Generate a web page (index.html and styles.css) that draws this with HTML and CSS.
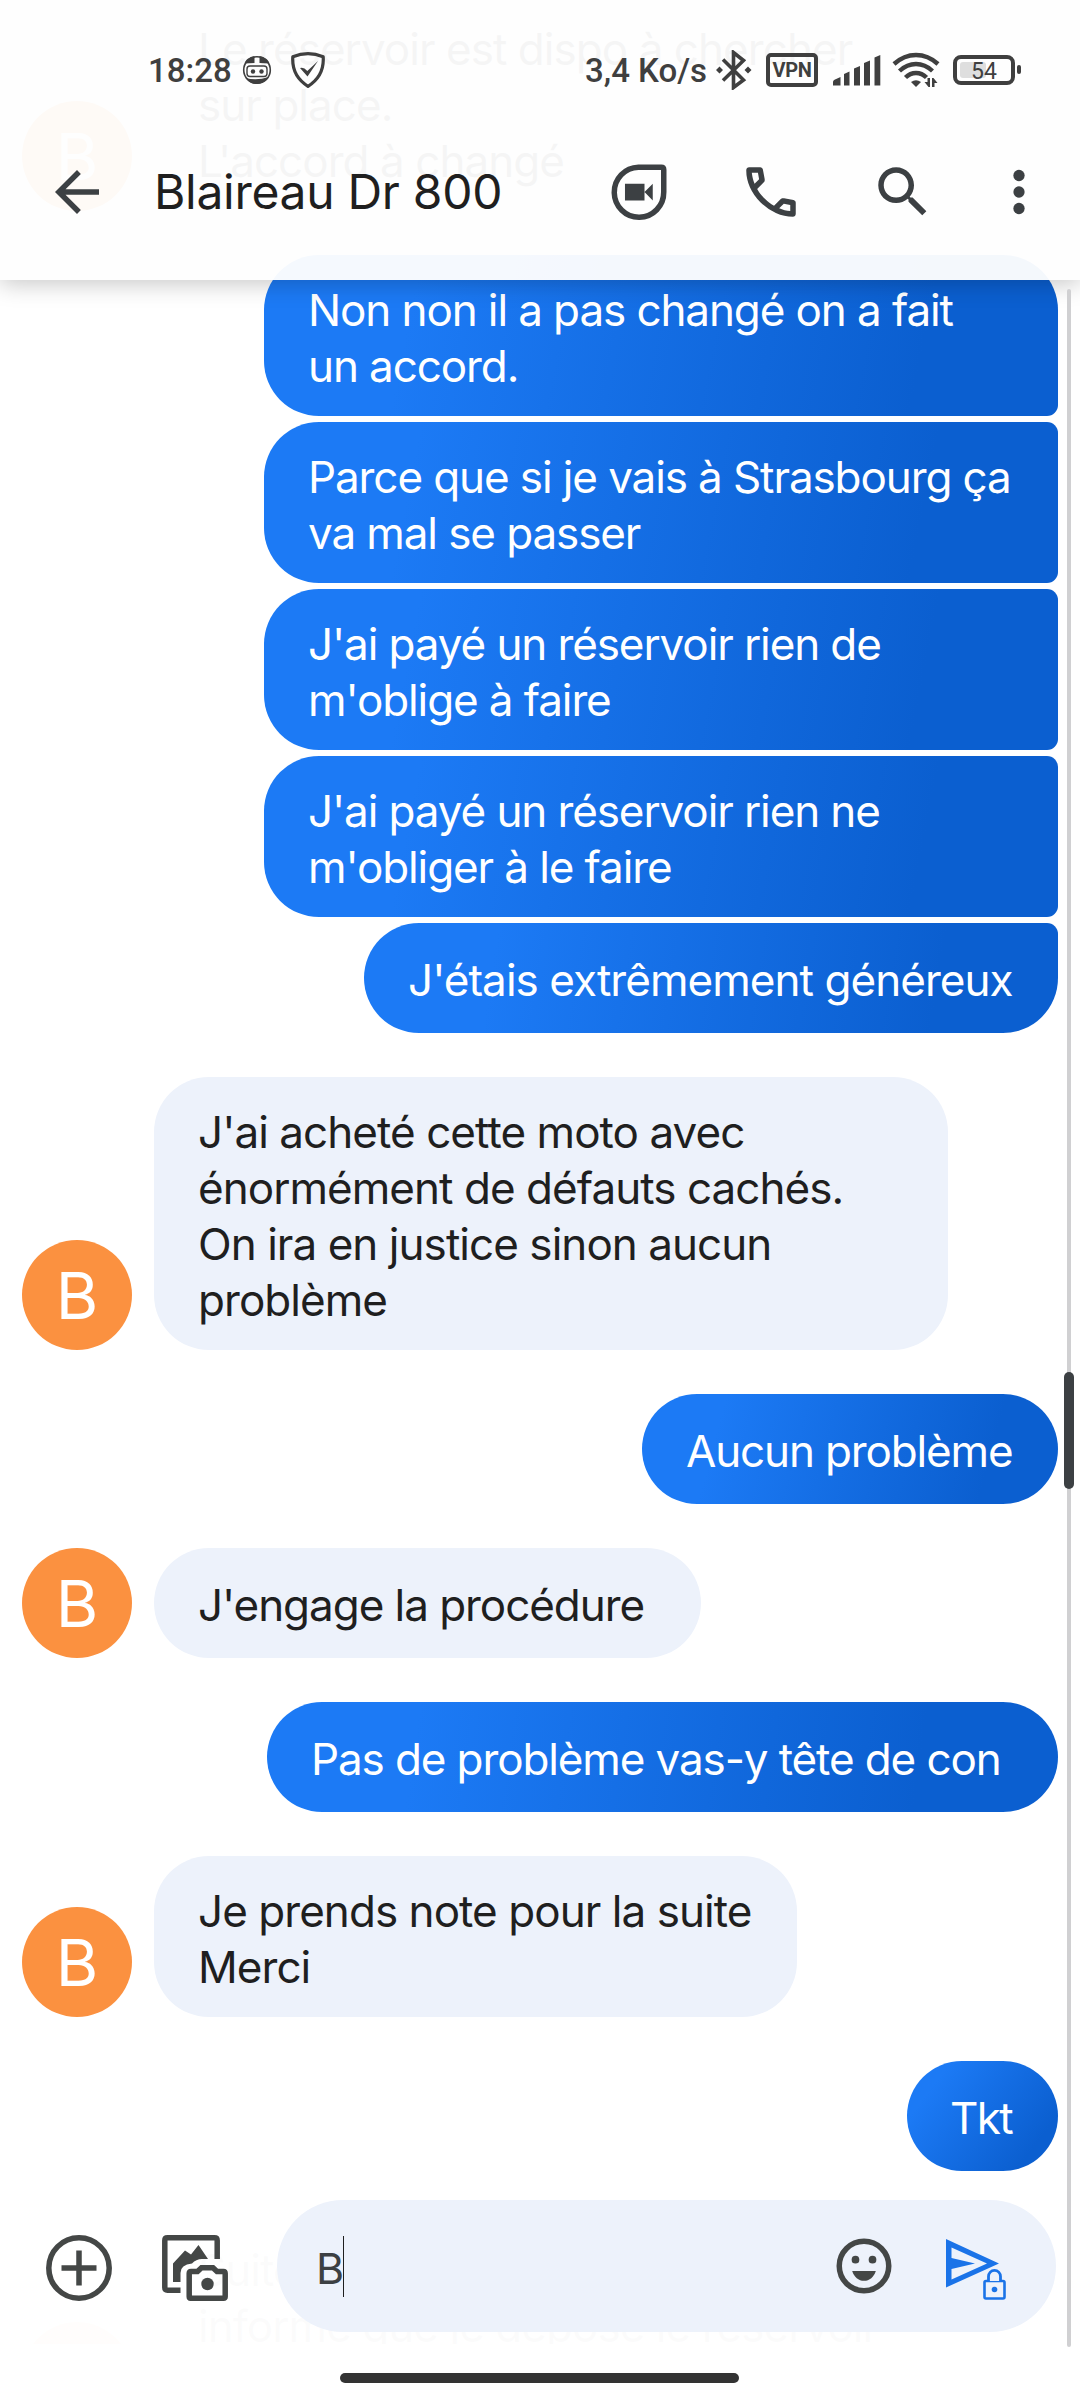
FILE: index.html
```html
<!DOCTYPE html>
<html lang="fr">
<head>
<meta charset="utf-8">
<title>Blaireau Dr 800</title>
<link rel="stylesheet" href="styles.css">
</head>
<body>
<div class="screen">
  <main class="thread">
    <div class="row in"><div class="avatar">B</div><div class="bubble received w-max">Le réservoir est dispo à chercher<br>sur place.<br>L'accord à changé</div></div>

    <div class="group">
      <div class="bubble sent first">Non non il a pas changé on a fait<br>un accord.</div>
      <div class="bubble sent mid">Parce que si je vais à Strasbourg ça<br>va mal se passer</div>
      <div class="bubble sent mid">J'ai payé un réservoir rien de<br>m'oblige à faire</div>
      <div class="bubble sent mid">J'ai payé un réservoir rien ne<br>m'obliger à le faire</div>
      <div class="bubble sent last single w-genereux">J'étais extrêmement généreux</div>
    </div>

    <div class="row in"><div class="avatar">B</div><div class="bubble received w-max">J'ai acheté cette moto avec<br>énormément de défauts cachés.<br>On ira en justice sinon aucun<br>problème</div></div>

    <div class="group"><div class="bubble sent single w-aucun">Aucun problème</div></div>

    <div class="row in"><div class="avatar">B</div><div class="bubble received single w-engage">J'engage la procédure</div></div>

    <div class="group"><div class="bubble sent single w-pas">Pas de problème vas-y tête de con</div></div>

    <div class="row in"><div class="avatar">B</div><div class="bubble received w-note">Je prends note pour la suite<br>Merci</div></div>

    <div class="group"><div class="bubble sent single w-tkt">Tkt</div></div>

    <div class="row in"><div class="avatar"></div><div class="bubble received w-max tall">Suite à ça je vous<br>informe que je dépose le réservoir</div></div>
  </main>

  <header class="header">
    <div class="status">
      <span class="time">18:28</span>
      <svg class="s-robot" width="30" height="30" viewBox="0 0 30 30"><path d="M12.500 1C7 2 3.500 5 2.500 8.500L12.500 8zM17.500 1C23 2 26.500 5 27.500 8.500L17.500 8z" fill="#3f3f3f"/><circle cx="15" cy="15" r="13.300" fill="none" stroke="#3f3f3f" stroke-width="1.600"/><rect x="5" y="11" width="20" height="10.500" rx="3" fill="none" stroke="#3f3f3f" stroke-width="1.400"/><circle cx="11" cy="16.500" r="2.200" fill="#3f3f3f"/><circle cx="19.500" cy="16.500" r="2.200" fill="#3f3f3f"/><path d="M3.500 23Q15 26 26.500 22Q22 29 15 29Q8 29 3.500 23Z" fill="#3f3f3f"/></svg>
      <svg class="s-shield" width="36" height="38" viewBox="0 0 36 38"><path d="M18 2.600Q25.500 2.600 33.200 5.800Q34.500 25 18 35.300Q1.500 25 2.800 5.800Q10.500 2.600 18 2.600Z" fill="none" stroke="#3f3f3f" stroke-width="3.200" stroke-linejoin="round"/><path d="M10 17L17.500 25.500L28 10L17.300 20Q13.500 15.500 10 17Z" fill="#3f3f3f"/></svg>
      <span class="rate">3,4 Ko/s</span>
      <svg class="s-bt" width="36" height="40" viewBox="0 0 36 40"><path d="M7 9.500L27.500 30L17.500 37.500V2.500L27.500 10.500L7 30.500" fill="none" stroke="#3f3f3f" stroke-width="3.600"/><path d="M0 20l3.500-3.500L7 20l-3.500 3.500zM28.500 20l3.500-3.500L35.500 20l-3.500 3.500z" fill="#3f3f3f"/></svg>
      <span class="vpn">VPN</span>
      <svg class="s-signal" width="49" height="32" viewBox="0 0 49 32"><path d="M1 31.500v-3.500q0-1.500 1.500-2.200l6-2.800v8.500zM12 31.500v-11.500l5.500-2.500v14zM22 31.500V14.500l6-2.500v19.500zM32 31.500V9l6-2.500v25zM42.500 31.500V3.500l5.800-2.500v30.500z" fill="#3f3f3f"/></svg>
      <svg class="s-wifi" width="48" height="36" viewBox="0 0 48 36"><g fill="none" stroke="#3f3f3f" stroke-width="4.400"><path d="M2 12Q12 3 24 3T46 12"/><path d="M7.500 19Q15 12 24 12T40.500 19"/><path d="M13.500 25.500Q18 21 24 21T34.500 25.500"/></g><path d="M19 30Q24 26.500 29 30L24 35Z" fill="#3f3f3f"/><path d="M32.500 30h3v-4h2.500v9h-1.500zM40 26h1.500l4 5h-3v4H40z" fill="#3f3f3f"/></svg>
      <span class="battery"><span class="charge"></span><span class="percent">54</span></span>
    </div>
    <div class="toolbar">
      <svg class="icon" viewBox="0 0 24 24"><path d="M20 11H7.830l5.590-5.590L12 4l-8 8 8 8 1.410-1.410L7.830 13H20v-2z"/></svg>
      <h1 class="title">Blaireau Dr 800</h1>
      <svg class="icon meet" viewBox="0 0 24 24"><path d="M11.800 3H20.100Q21 3 21 3.900V12A9 9.100 0 1 1 11.800 3Z" fill="none" stroke="#3c4043" stroke-width="2"/><path d="M6.900 9h7.100v6.100H6.900zM14 12l3-3v6.100z"/></svg>
      <svg class="icon call" viewBox="0 0 24 24"><path d="M19.950 21q-3.125 0-6.175-1.362T8.225 15.800Q5.700 13.275 4.338 10.238T3 4.050q0-.45.3-.75t.75-.3H8.100q.35 0 .625.238t.325.562l.65 3.500q.05.4-.025.675T9.400 8.450L6.975 10.900q.5.925 1.187 1.787t1.513 1.663q.775.775 1.625 1.438T13.100 17l2.350-2.350q.225-.225.588-.337t.712-.063l3.450.7q.35.1.575.363T21 15.900v4.050q0 .45-.3.750t-.75.3M6.025 9l1.650-1.650L7.250 5H5.025q.125 1.025.35 2.025T6.025 9m8.950 8.950q.975.425 1.988.675T19 18.950v-2.200l-2.350-.475z"/></svg>
      <svg class="icon search" viewBox="0 0 24 24"><path d="M15.500 14h-.79l-.28-.27C15.410 12.590 16 11.110 16 9.500 16 5.910 13.090 3 9.500 3S3 5.910 3 9.500 5.910 16 9.500 16c1.610 0 3.090-.59 4.230-1.570l.27.28v.79l5 4.990L20.490 19l-4.990-5zm-6 0C7.010 14 5 11.990 5 9.500S7.010 5 9.500 5 14 7.010 14 9.500 11.990 14 9.500 14z"/></svg>
      <svg class="icon more" viewBox="0 0 24 24"><circle cx="12" cy="6" r="2.050"/><circle cx="12" cy="12" r="2.050"/><circle cx="12" cy="18" r="2.050"/></svg>
    </div>
  </header>

  <footer class="composer">
    <div class="compose-row">
      <svg class="tool" viewBox="0 0 66 66"><circle cx="33" cy="33" r="30.200"/><path d="M33 15.500V50.500M15.500 33H50.500"/></svg>
      <svg class="tool gallery" viewBox="0 0 66 66"><path d="M55.200 24V5.500Q55.200 2.800 52.500 2.800H5.500Q2.800 2.800 2.800 5.500V52.500Q2.800 55.200 5.500 55.200H18.500"/><path d="M11 47V28.500L23 15.500L29 19.500L36.500 10L46 24H40Q34 24 30 28.500Q18.500 29.500 18.500 38V47Z" class="solid"/><path d="M29 36.500H35.500L39.500 32.800H51L55 36.500H61.500Q63.200 36.500 63.200 38.500V61.500Q63.200 63.200 61.500 63.200H28.500Q27.200 63.200 27.200 61.500V38.500Q27.200 36.500 29 36.500Z"/><circle cx="45.500" cy="49" r="6.200" class="solid"/></svg>
      <div class="field">
        <span class="draft">B</span><span class="caret"></span>
        <svg class="emoji" viewBox="0 0 24 24"><circle cx="12" cy="12" r="9" fill="none" stroke="#444746" stroke-width="2"/><circle cx="8.900" cy="9.700" r="1.400"/><circle cx="15.100" cy="9.700" r="1.400"/><path d="M7.700 13.800H16.300C15.600 16 14 17.400 12 17.400S8.400 16 7.700 13.800Z"/></svg>
        <svg class="send" viewBox="0 0 64 64"><path d="M3 3L56 27.500L3 51.500ZM8.500 11.500V22L32 27.500L8.500 33V43.500L44 27.500Z" fill-rule="evenodd" fill="#1a73e8"/><rect x="41" y="43" width="21" height="19" rx="1.500" fill="none" stroke="#edf2fb" stroke-width="7"/><rect x="41.500" y="45" width="20" height="17.500" rx="1.500" fill="#edf2fb" stroke="#1a73e8" stroke-width="2.600"/><path d="M45.500 45V40.500A6 6.200 0 0 1 57.500 40.500V45" fill="#edf2fb" stroke="#1a73e8" stroke-width="2.800"/><circle cx="51.500" cy="53.500" r="2.800" fill="#1a73e8"/></svg>
      </div>
    </div>
    <div class="home-bar"></div>
  </footer>
  <div class="scroll-track"></div>
  <div class="scroll-thumb"></div>
</div>
</body>
</html>
```
FILE: styles.css
```css
* { box-sizing: border-box; }
body { margin: 0; background: #fff; }
.screen {
  position: relative;
  width: 1080px;
  height: 2400px;
  overflow: hidden;
  background: #fff;
  font-family: Inter, "Liberation Sans", sans-serif;
}

/* Conversation */
.thread {
  display: flex;
  flex-direction: column;
  gap: 44px;
  height: 2350px;
  margin-top: -6px;
  padding: 0 22px;
  overflow: hidden;
}
.row, .group { flex: none; }
.row { display: flex; align-items: flex-end; gap: 22px; }
.avatar {
  flex: none;
  width: 110px;
  height: 110px;
  border-radius: 50%;
  background: #fb9140;
  color: #fff;
  font-size: 65px;
  line-height: 111px;
  text-align: center;
}
.group { display: flex; flex-direction: column; align-items: flex-end; gap: 6px; }
.bubble {
  width: 794px;
  padding: 27px 0 22px 44px;
  border-radius: 55px;
  font-size: 44px;
  line-height: 56px;
  letter-spacing: -1.1px;
  white-space: nowrap;
}
.single { padding-top: 29px; padding-bottom: 25px; }
.received { background: #edf2fb; color: #1f1f1f; letter-spacing: -0.95px; }
.sent {
  --angle: 101deg;
  background: linear-gradient(var(--angle), #1c7af5 19%, #0b5fd0 82%);
  color: #fff;
}
.first { border-bottom-right-radius: 11px; }
.mid { border-top-right-radius: 11px; border-bottom-right-radius: 11px; }
.last { border-top-right-radius: 11px; }
.tall { height: 217px; }
.w-max { width: 794px; }
.w-genereux { --angle: 99deg; width: 694px; letter-spacing: -0.95px; }
.w-aucun { --angle: 105deg; width: 416px; letter-spacing: -1.15px; }
.w-engage { width: 547px; letter-spacing: -1.05px; }
.w-pas { --angle: 98deg; width: 791px; letter-spacing: -1.11px; }
.w-note { width: 643px; }
.w-tkt { --angle: 127deg; width: 151px; padding-left: 43px; letter-spacing: -1.6px; }

/* Header */
.header {
  position: absolute;
  inset: 0 0 auto;
  height: 280px;
  background: rgba(254, 254, 254, .96);
  box-shadow: 0 4px 22px rgba(0, 0, 0, .22);
}
.status {
  display: flex;
  align-items: center;
  height: 104px;
  padding: 36px 0 0 148px;
  color: #3f3f3f;
  font-family: Roboto, sans-serif;
  font-size: 33px;
  font-weight: 500;
  line-height: 68px;
  white-space: nowrap;
}
.time, .rate { padding-top: 2px; }
.time { width: 94px; }
.status svg { flex: none; }
.s-shield { margin-left: 18px; }
.rate { width: 131px; margin-left: 259px; }
.vpn {
  width: 52px;
  height: 34px;
  margin-left: 14px;
  border: 4px solid #3f3f3f;
  border-radius: 5px;
  font-size: 20px;
  font-weight: 700;
  line-height: 26px;
  letter-spacing: -.4px;
  text-align: center;
}
.s-signal { margin-left: 14px; }
.s-wifi { margin-left: 11px; }
.battery {
  position: relative;
  width: 62px;
  height: 30px;
  margin-left: 13px;
  border: 4px solid #3f3f3f;
  border-radius: 8px;
}
.battery::after {
  content: "";
  position: absolute;
  left: 60px;
  top: 6px;
  width: 4px;
  height: 9px;
  border-radius: 2px;
  background: #3f3f3f;
}
.charge {
  position: absolute;
  left: 3px;
  top: 3px;
  width: 26px;
  height: 16px;
  border-radius: 3px;
  background: #dedede;
}
.percent {
  position: absolute;
  inset: 0;
  font-size: 23px;
  font-weight: 400;
  line-height: 25px;
  text-align: center;
}
.toolbar { display: flex; align-items: center; height: 176px; padding: 0 28px 0 44px; }
.icon { flex: none; width: 66px; height: 66px; fill: #3c4043; }
.title {
  margin: 0 auto 0 44px;
  color: #1f1f1f;
  font-size: 48px;
  font-weight: 400;
  line-height: 60px;
  letter-spacing: -.3px;
}
.call { margin-left: 66px; }
.search { margin-left: 66px; }
.more { margin-left: 50px; }

/* Composer */
.composer {
  position: absolute;
  inset: 2178px 0 0;
  padding: 22px 24px 0 46px;
  background: rgba(255, 255, 255, .985);
}
.compose-row { display: flex; align-items: center; height: 132px; }
.tool {
  flex: none;
  width: 66px;
  height: 66px;
  margin-top: 4px;
  fill: none;
  stroke: #444746;
  stroke-width: 5.5px;
}
.tool .solid { fill: #444746; stroke: none; }
.gallery { margin-left: 50px; }
.field {
  display: flex;
  align-items: center;
  flex: 1;
  height: 132px;
  margin-left: 49px;
  padding: 0 49px 0 39px;
  border-radius: 66px;
  background: #edf2fb;
}
.draft { width: 27px; padding-top: 4px; color: #3c4043; font-size: 43px; line-height: 60px; }
.caret { width: 1px; height: 61px; background: #1f1f1f; }
.emoji { width: 66px; height: 66px; margin-left: auto; fill: #444746; }
.send { width: 64px; height: 64px; margin: 4px 0 0 46px; }
.home-bar {
  width: 399px;
  height: 10px;
  margin: 41px 0 0 294px;
  border-radius: 5px;
  background: #333;
}

/* Scroll indicator floating over the page edge */
.scroll-track {
  position: absolute;
  left: 1067px;
  top: 289px;
  width: 4px;
  height: 2058px;
  border-radius: 2px;
  background: #d0d0d2;
}
.scroll-thumb {
  position: absolute;
  left: 1064px;
  top: 1372px;
  width: 10px;
  height: 117px;
  border-radius: 5px;
  background: #3c4043;
}
```
